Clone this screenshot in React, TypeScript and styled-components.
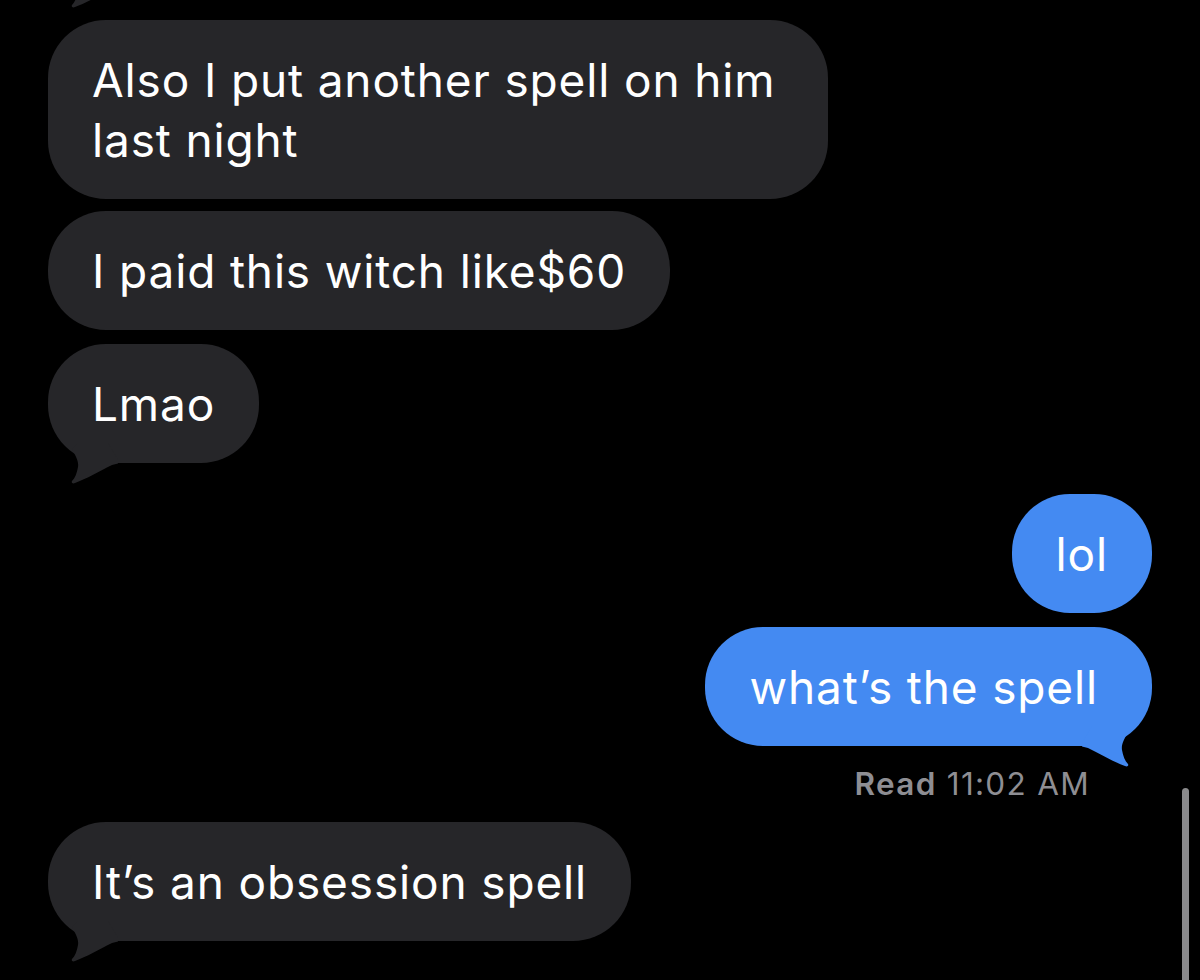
import React from "react";
import styled, { createGlobalStyle } from "styled-components";

const Global = createGlobalStyle`
  html, body { margin: 0; padding: 0; background: #000; }
  * { box-sizing: border-box; }
`;

const GREY = "#262629";
const BLUE = "#448af2";

const Screen = styled.div`
  position: relative;
  width: 1200px;
  height: 980px;
  overflow: hidden;
  background: #000;
  padding: 0 48px;
  display: flex;
  flex-direction: column;
  align-items: flex-start;
  font-family: Inter, "Noto Sans", sans-serif;
`;

const TopTailStrip = styled.div`
  height: 9px;
  width: 80px;
  overflow: hidden;
  display: flex;
  align-items: flex-end;
  flex-shrink: 0;
`;

const Bubble = styled.div<{ $out?: boolean; $gap: number; $padR?: number }>`
  position: relative;
  align-self: ${(p) => (p.$out ? "flex-end" : "flex-start")};
  margin-top: ${(p) => p.$gap}px;
  max-width: 780px;
  padding: 29.5px ${(p) => p.$padR ?? 44}px 29.5px 44px;
  border-radius: 58px;
  background: ${(p) => (p.$out ? BLUE : GREY)};
  color: #fff;
  font-size: 46px;
  line-height: 60px;
  letter-spacing: 0.85px;
  flex-shrink: 0;
`;

const TailSvg = styled.svg<{ $out?: boolean }>`
  position: absolute;
  bottom: -22px;
  width: 70px;
  height: 42px;
  ${(p) => (p.$out ? "right: 0; transform: scaleX(-1);" : "left: 0;")}
`;

const Receipt = styled.div`
  align-self: flex-end;
  margin-top: 20px;
  margin-right: 62px;
  font-size: 31.5px;
  line-height: 36px;
  letter-spacing: 1.3px;
  color: #8e8e93;
  flex-shrink: 0;
  b { font-weight: 600; }
`;

const Scrollbar = styled.div`
  position: absolute;
  left: 1182px;
  top: 788px;
  width: 7px;
  height: 200px;
  border-radius: 4px;
  background: #8a8a8c;
`;

const tailPath =
  "M 24 6 C 27 12 31 18 30 24 C 29 30 27 35 24 38 C 23 40 25 41 27 40 C 38 36 52 28 64 22 L 72 20 L 60 0 L 30 0 Z";

const Tail: React.FC<{ out?: boolean; color: string }> = ({ out, color }) => (
  <TailSvg $out={out} viewBox="0 0 70 42">
    <path d={tailPath} fill={color} />
  </TailSvg>
);

const TopTailSvg = styled.svg`
  width: 70px;
  height: 42px;
  flex-shrink: 0;
`;

export default function App() {
  return (
    <Screen>
      <Global />
      <TopTailStrip>
        <TopTailSvg viewBox="0 0 70 42">
          <path d={tailPath} fill={GREY} />
        </TopTailSvg>
      </TopTailStrip>
      <Bubble $gap={11}>Also I put another spell on him last night</Bubble>
      <Bubble $gap={12}>I paid this witch like$60</Bubble>
      <Bubble $gap={14}>
        Lmao
        <Tail color={GREY} />
      </Bubble>
      <Bubble $out $gap={31}>lol</Bubble>
      <Bubble $out $gap={14} $padR={54}>
        what’s the spell
        <Tail out color={BLUE} />
      </Bubble>
      <Receipt>
        <b>Read</b> 11:02 AM
      </Receipt>
      <Bubble $gap={20}>
        It’s an obsession spell
        <Tail color={GREY} />
      </Bubble>
      <Scrollbar />
    </Screen>
  );
}
